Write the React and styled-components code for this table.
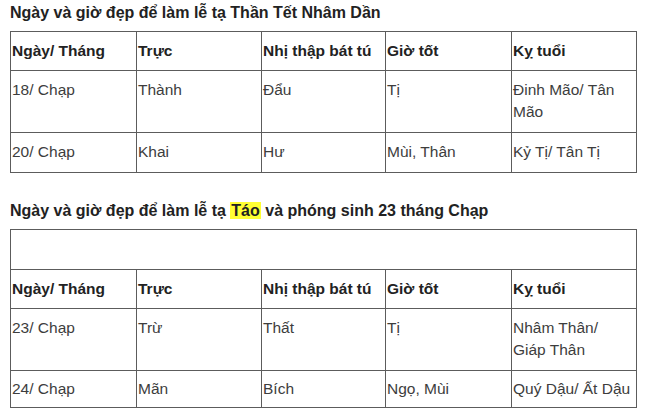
import React from "react"
import styled, { createGlobalStyle } from "styled-components"

const GlobalStyle = createGlobalStyle`
   html, body {
      margin: 0;
      padding: 0;
      background: #fff;
   }
   body {
      font-family: "Liberation Sans", Arial, sans-serif;
      color: #333;
   }
`

const Page = styled.div`
   width: 650px;
   height: 416px;
   overflow: hidden;
   padding: 2px 0 0 10px;
   box-sizing: border-box;
`

const Title = styled.h3`
   margin: ${(p) => p.$top || 0}px 0 7px;
   font-size: 16px;
   line-height: 22px;
   font-weight: bold;
   color: #222;
   white-space: nowrap;
`

const Mark = styled.span`
   background: #ffff33;
   padding: 0 1px;
`

const Table = styled.table`
   width: 626px;
   table-layout: fixed;
   border-collapse: collapse;
   font-size: 15.5px;
   line-height: 22px;
`

const Cell = styled.td`
   border: 1px solid #5c5c5c;
   padding: ${(p) => (p.$tight ? "7px 2px 7px 1px" : "8px 2px 9px 1px")};
   vertical-align: top;
   color: #3d3d3d;
   text-align: left;
`

const Head = styled(Cell).attrs({ as: "th" })`
   padding: 8px 2px 8px 1px;
   font-weight: bold;
   color: #222;
   vertical-align: middle;
`

const widths = [126, 125, 124, 126, 125]
const headers = ["Ngày/ Tháng", "Trực", "Nhị thập bát tú", "Giờ tốt", "Kỵ tuổi"]

const firstRows = [
   ["18/ Chạp", "Thành", "Đẩu", "Tị", "Đinh Mão/ Tân Mão"],
   ["20/ Chạp", "Khai", "Hư", "Mùi, Thân", "Kỷ Tị/ Tân Tị"],
]

const secondRows = [
   ["23/ Chạp", "Trừ", "Thất", "Tị", "Nhâm Thân/ Giáp Thân"],
   ["24/ Chạp", "Mãn", "Bích", "Ngọ, Mùi", "Quý Dậu/ Ất Dậu"],
]

const DayTable = ({ rows, blankTop = false }) => (
   <Table>
      <colgroup>
         {widths.map((w, i) => (
            <col key={i} style={{ width: w }} />
         ))}
      </colgroup>
      <tbody>
         {blankTop && (
            <tr>
               <Cell colSpan={5}>&nbsp;</Cell>
            </tr>
         )}
         <tr>
            {headers.map((h) => (
               <Head key={h}>{h}</Head>
            ))}
         </tr>
         {rows.map((row, r) => (
            <tr key={r}>
               {row.map((c, i) => (
                  <Cell key={i} $tight={blankTop && r === rows.length - 1}>
                     {c}
                  </Cell>
               ))}
            </tr>
         ))}
      </tbody>
   </Table>
)

const App = () => {
   return (
      <Page>
         <GlobalStyle />
         <Title>Ngày và giờ đẹp để làm lễ tạ Thần Tết Nhâm Dần</Title>
         <DayTable rows={firstRows} />
         <Title $top={27}>
            Ngày và giờ đẹp để làm lễ tạ <Mark>Táo</Mark> và phóng sinh 23 tháng Chạp
         </Title>
         <DayTable rows={secondRows} blankTop />
      </Page>
   )
}

export default App
